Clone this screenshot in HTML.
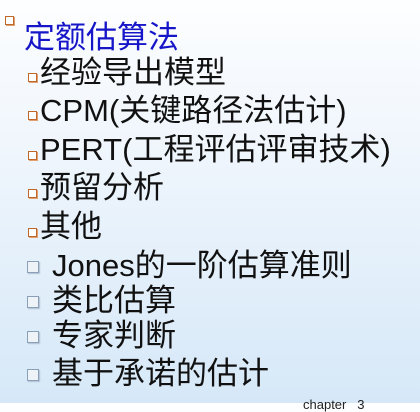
<!DOCTYPE html>
<html><head><meta charset="utf-8"><style>
html,body{margin:0;padding:0}
body{width:420px;height:403px;overflow:hidden;position:relative;background:linear-gradient(180deg,#fdfeff 0%,#eef5fc 40%,#d6e8f8 100%);font-family:"Liberation Sans","Noto Sans CJK SC",sans-serif;}
.l{position:absolute;font-size:31px;line-height:36px;color:#111;white-space:nowrap;}
.t{color:#1616c8;}
.ob{position:absolute;width:7px;height:7px;border:1px solid #c0682a;background:#fff;box-shadow:1px 1px 0 #e0a070;}
.gb{position:absolute;width:10px;height:10px;border:1px solid #8aa0b8;background:#eef3f8;box-shadow:1px 1px 1px #b0c0d0;}
.f{position:absolute;left:303px;top:397px;font-size:13px;color:#222;}
</style></head><body>
<div class="ob" style="left:5px;top:16px"></div>
<div class="l t" style="left:24px;top:20px">定额估算法</div>
<div class="ob" style="left:28px;top:73px"></div><div class="l" style="left:40px;top:55px">经验导出模型</div>
<div class="ob" style="left:28px;top:111px"></div><div class="l" style="left:40px;top:93px">CPM(关键路径法估计)</div>
<div class="ob" style="left:28px;top:151px"></div><div class="l" style="left:40px;top:132px">PERT(工程评估评审技术)</div>
<div class="ob" style="left:28px;top:189px"></div><div class="l" style="left:40px;top:170px">预留分析</div>
<div class="ob" style="left:28px;top:228px"></div><div class="l" style="left:40px;top:209px">其他</div>
<div class="gb" style="left:27px;top:261px"></div><div class="l" style="left:52px;top:248px">Jones的一阶估算准则</div>
<div class="gb" style="left:27px;top:296px"></div><div class="l" style="left:52px;top:283px">类比估算</div>
<div class="gb" style="left:27px;top:331px"></div><div class="l" style="left:52px;top:318px">专家判断</div>
<div class="gb" style="left:27px;top:369px"></div><div class="l" style="left:52px;top:356px">基于承诺的估计</div>
<div class="f">chapter&nbsp;&nbsp;&nbsp;3</div>
</body></html>
